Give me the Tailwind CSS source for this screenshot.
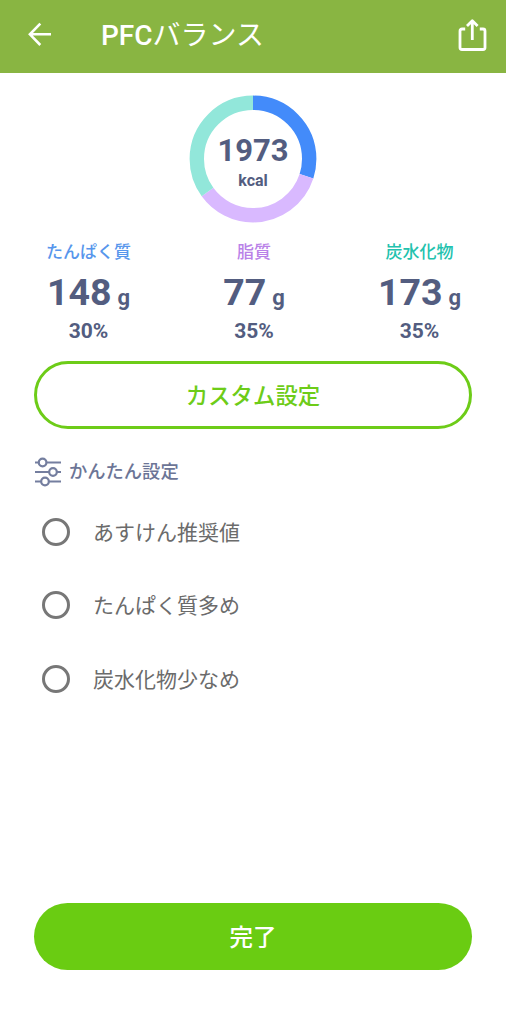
<!DOCTYPE html>
<html lang="ja">
<head>
<meta charset="utf-8">
<title>PFCバランス</title>
<script src="https://cdn.jsdelivr.net/npm/@tailwindcss/browser@4"></script>
</head>
<body class="bg-white font-['Roboto','Noto_Sans_CJK_JP',sans-serif] text-[#535d80]">
<div class="flex h-[1024px] w-[506px] flex-col overflow-hidden">
  <header class="flex h-[73px] shrink-0 items-center bg-[#89b542] pl-[28px] pr-[19px] text-white">
    <svg class="mt-[-5px] h-6 w-6" viewBox="0 0 24 24" fill="none" stroke="currentColor" stroke-width="2.6"><path d="M23 12.3H2.2M12.3 1.6 1.9 12.3 12.3 23"/></svg>
    <h1 class="-mt-0.5 ml-[49px] flex-1 whitespace-nowrap text-[28px] leading-[40px]"><span class="font-medium">PFC</span>バランス</h1>
    <svg class="mt-[-4px] h-8 w-[29px]" viewBox="0 0 29 32" fill="none" stroke="currentColor" stroke-width="2.8" stroke-linejoin="round"><path d="M7.2 10H4a2 2 0 0 0-2 2v16.500a2 2 0 0 0 2 2h21a2 2 0 0 0 2-2V12a2 2 0 0 0-2-2h-3.200M14.300 21V2M9 7l5.300-5.300L19.600 7"/></svg>
  </header>
  <main class="flex flex-1 flex-col px-[34px] pt-[22px]">
    <div class="grid h-[128px] w-[128px] place-items-center self-center">
      <svg class="col-start-1 row-start-1 h-32 w-32 -rotate-90" viewBox="0 0 128 128" fill="none" stroke-width="14.400">
        <circle cx="64" cy="64" r="56.200" pathLength="100" stroke="#438bfa" stroke-dasharray="30 70"/>
        <circle cx="64" cy="64" r="56.200" pathLength="100" stroke="#d9b9ff" stroke-dasharray="35 65" stroke-dashoffset="-30"/>
        <circle cx="64" cy="64" r="56.200" pathLength="100" stroke="#92e7da" stroke-dasharray="35 65" stroke-dashoffset="-65"/>
      </svg>
      <div class="col-start-1 row-start-1 flex flex-col items-center pt-2 font-bold">
        <span class="text-[31px] leading-[36px]">1973</span>
        <span class="text-[16px] leading-[24px]">kcal</span>
      </div>
    </div>
    <div class="-mr-px ml-px mt-[16px] flex justify-between text-center font-bold">
      <div class="w-[107px]">
        <div class="text-[17px] font-medium leading-[26px] text-[#5796ec]">たんぱく質</div>
        <div class="mt-[3px] h-[48px] text-[37.500px] leading-[48px]">148<span class="ml-[6px] text-[22px] leading-none">g</span></div>
        <div class="mt-[3px] text-[21px] leading-[24px]">30%</div>
      </div>
      <div class="w-[107px]">
        <div class="text-[17px] font-medium leading-[26px] text-[#b981e8]">脂質</div>
        <div class="mt-[3px] h-[48px] text-[37.500px] leading-[48px]">77<span class="ml-[6px] text-[22px] leading-none">g</span></div>
        <div class="mt-[3px] text-[21px] leading-[24px]">35%</div>
      </div>
      <div class="w-[107px]">
        <div class="text-[17px] font-medium leading-[26px] text-[#23c2ae]">炭水化物</div>
        <div class="mt-[3px] h-[48px] text-[37.500px] leading-[48px]">173<span class="ml-[6px] text-[22px] leading-none">g</span></div>
        <div class="mt-[3px] text-[21px] leading-[24px]">35%</div>
      </div>
    </div>
    <button class="mt-[18px] h-[68px] w-full shrink-0 rounded-full border-[3px] border-[#6dcc18] pt-[3px] text-[22.400px] font-medium text-[#6dcc18]">カスタム設定</button>
    <div class="mt-[28px] flex h-[30px] items-center">
      <svg class="h-[30px] w-[28px]" viewBox="0 0 28 30" fill="none" stroke="#747e9f" stroke-width="2.200"><path d="M1 5.500h3.500m8 0H27M1 15h14m8 0h4M1 24.500h6m8 0h12"/><circle cx="8.600" cy="5.500" r="3.800"/><circle cx="19" cy="15" r="3.800"/><circle cx="11" cy="24.500" r="3.800"/></svg>
      <h2 class="ml-[7px] text-[18.300px] font-medium leading-[28px] text-[#6c7596]">かんたん設定</h2>
    </div>
    <div class="mt-[8px] flex flex-col pl-[8px] text-[21px] text-[#6b6b6b]">
      <label class="flex h-[73.500px] items-center gap-[23px]"><span class="h-[28px] w-[28px] rounded-full border-[3px] border-[#777]"></span><span class="pt-[3px]">あすけん推奨値</span></label>
      <label class="flex h-[73.500px] items-center gap-[23px]"><span class="h-[28px] w-[28px] rounded-full border-[3px] border-[#777]"></span><span class="pt-[3px]">たんぱく質多め</span></label>
      <label class="flex h-[73.500px] items-center gap-[23px]"><span class="h-[28px] w-[28px] rounded-full border-[3px] border-[#777]"></span><span class="pt-[3px]">炭水化物少なめ</span></label>
    </div>
    <button class="mb-[54px] mt-auto h-[67px] w-full shrink-0 rounded-full bg-[#6acc12] pt-[5px] text-[23.500px] font-medium text-white">完了</button>
  </main>
</div>
</body>
</html>
